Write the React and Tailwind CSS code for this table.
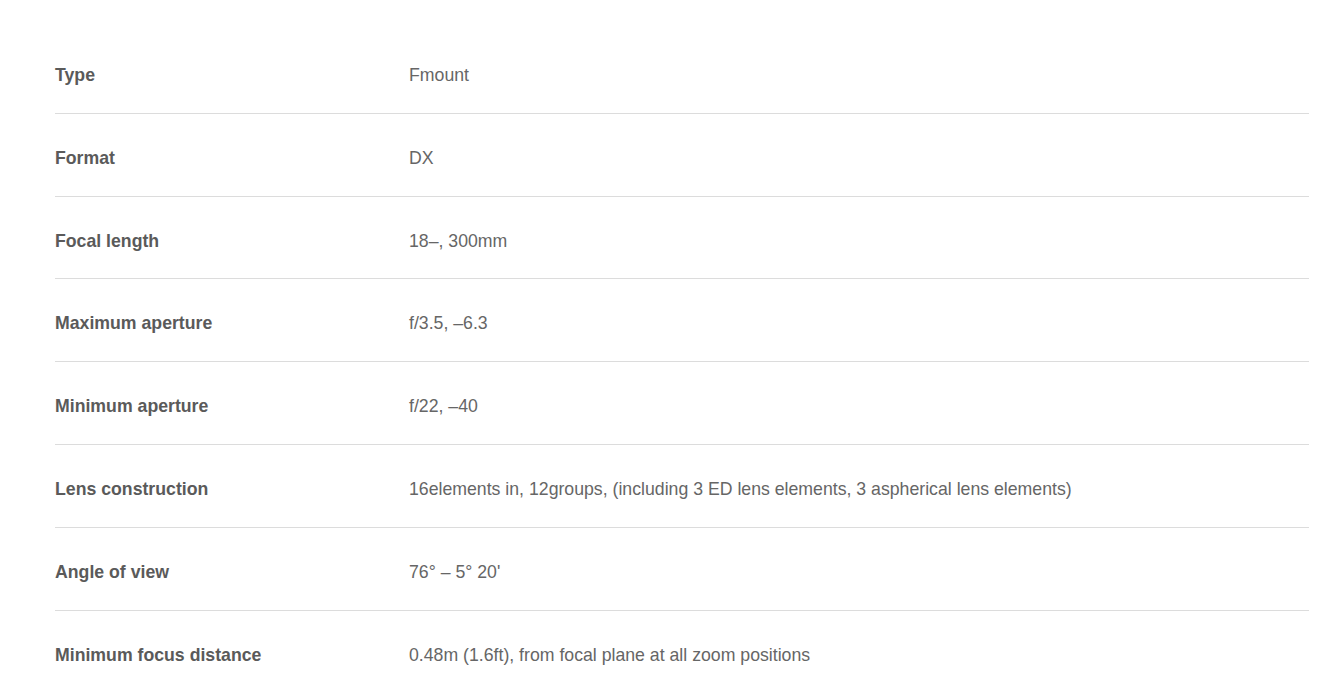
const specs = [
  ['Type', 'Fmount'],
  ['Format', 'DX'],
  ['Focal length', '18–, 300mm'],
  ['Maximum aperture', 'f/3.5, –6.3'],
  ['Minimum aperture', 'f/22, –40'],
  ['Lens construction', '16elements in, 12groups, (including 3 ED lens elements, 3 aspherical lens elements)'],
  ['Angle of view', "76° – 5° 20'"],
  ['Minimum focus distance', '0.48m (1.6ft), from focal plane at all zoom positions'],
];

export default function App() {
  return (
    <div className="min-h-screen bg-white pt-[31px] pl-[55px] pr-[24px] font-['Liberation_Sans',Arial,sans-serif]">
      <dl>
        {specs.map(([label, value], i) => (
          <div
            key={label}
            className={`flex pt-[34px] pb-[27.8px] leading-5 ${i < specs.length - 1 ? 'border-b border-[#dcdcdc]' : ''}`}
          >
            <dt className="w-[354px] shrink-0 text-[17.7px] font-bold text-[#5a5a5a]">{label}</dt>
            <dd className="text-[17.7px] text-[#666666]">{value}</dd>
          </div>
        ))}
      </dl>
    </div>
  );
}
